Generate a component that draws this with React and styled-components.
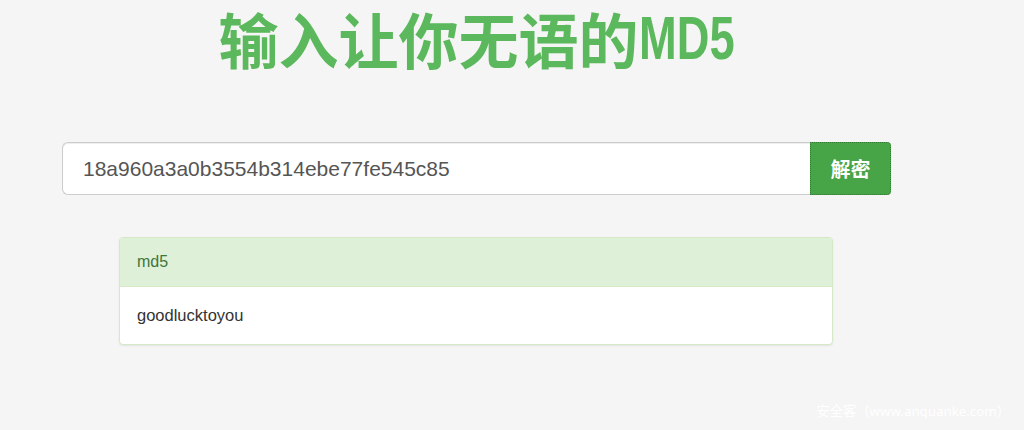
import React from 'react';
import styled, { createGlobalStyle } from 'styled-components';

const GlobalStyle = createGlobalStyle`
  html, body {
    margin: 0;
    padding: 0;
    background: #f5f5f5;
    font-family: "Liberation Sans", "Noto Sans CJK SC", Arial, sans-serif;
    color: #333;
  }
`;

const Page = styled.div`
  position: relative;
  width: 1024px;
  height: 430px;
  overflow: hidden;
`;

const Column = styled.div`
  width: 829px;
  margin-left: 62px;
`;

const Title = styled.h1`
  margin: 0;
  text-align: center;
  font-family: "Noto Sans CJK SC", sans-serif;
  font-size: 60px;
  line-height: 76px;
  font-weight: 700;
  color: #5cb85c;
`;

/* the Latin part of the title is a tall, condensed face */
const Latin = styled.span`
  display: inline-block;
  font-family: "Liberation Sans", Arial, sans-serif;
  font-weight: 700;
  font-size: 62px;
  line-height: 76px;
  vertical-align: top;
  transform: scaleX(0.73);
  transform-origin: left center;
  margin-right: -35px;
`;

const SearchRow = styled.form`
  display: flex;
  margin-top: 66px;
  height: 53px;
`;

const Input = styled.input`
  flex: 1;
  box-sizing: border-box;
  height: 53px;
  padding: 0 20px;
  border: 1px solid #ccc;
  border-right: none;
  border-radius: 6px 0 0 6px;
  background: #fff;
  box-shadow: inset 0 1px 1px rgba(0, 0, 0, 0.075);
  font-family: "Liberation Sans", Arial, sans-serif;
  font-size: 21px;
  color: #555;
  outline: none;
`;

const Button = styled.button`
  width: 81px;
  height: 53px;
  box-sizing: border-box;
  border: 1px dotted #2f7d2f;
  border-radius: 0 4px 4px 0;
  background: #47a447;
  color: #fff;
  font-family: "Noto Sans CJK SC", sans-serif;
  font-weight: 700;
  font-size: 20px;
  cursor: pointer;
`;

const Panel = styled.div`
  margin: 42px 58px 0 57px;
  border: 1px solid #d6e9c6;
  border-radius: 4px;
  background: #fff;
  box-shadow: 0 1px 2px rgba(0, 0, 0, 0.08);
  overflow: hidden;
`;

const PanelHeading = styled.div`
  height: 48px;
  display: flex;
  align-items: center;
  padding: 0 17px;
  background: #dff0d8;
  border-bottom: 1px solid #d6e9c6;
  color: #3c763d;
  font-size: 16px;
`;

const PanelBody = styled.div`
  height: 57px;
  display: flex;
  align-items: center;
  padding: 0 17px;
  font-size: 16.5px;
  color: #333;
`;

const Watermark = styled.div`
  position: absolute;
  right: 14px;
  bottom: 10px;
  font-family: "Noto Sans", "Noto Sans CJK SC", sans-serif;
  font-size: 13.3px;
  color: #ffffff;
`;

export default function App() {
  return (
    <Page>
      <GlobalStyle />
      <Column>
        <Title>
          输入让你无语的<Latin>MD5</Latin>
        </Title>
        <SearchRow onSubmit={(e) => e.preventDefault()}>
          <Input defaultValue="18a960a3a0b3554b314ebe77fe545c85" />
          <Button type="submit">解密</Button>
        </SearchRow>
        <Panel>
          <PanelHeading>md5</PanelHeading>
          <PanelBody>goodlucktoyou</PanelBody>
        </Panel>
      </Column>
      <Watermark>安全客（www.anquanke.com）</Watermark>
    </Page>
  );
}
